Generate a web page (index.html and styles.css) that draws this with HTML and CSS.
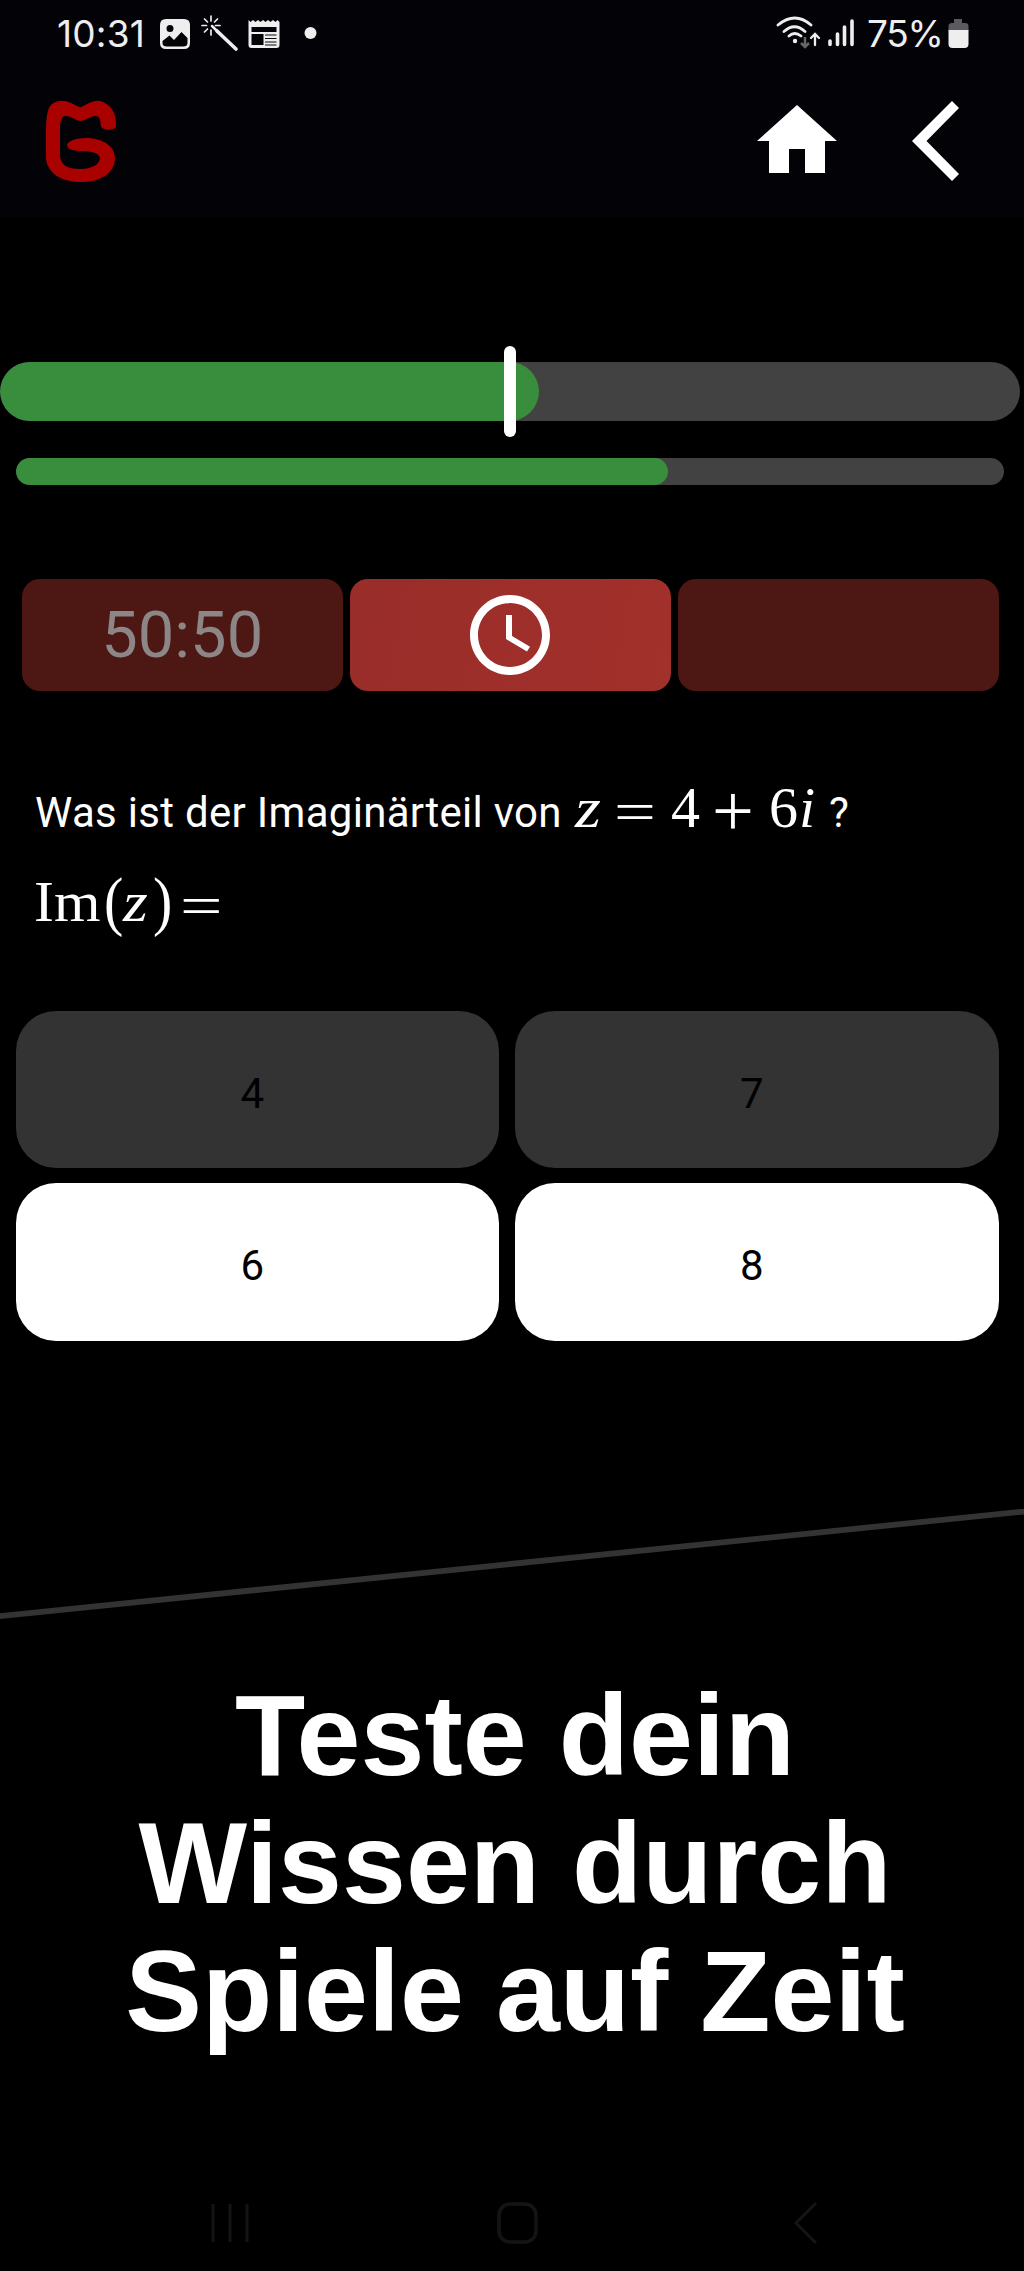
FILE: index.html
```html
<!DOCTYPE html>
<html lang="de">
<head>
<meta charset="utf-8">
<title>Quiz</title>
<link rel="stylesheet" href="styles.css">
</head>
<body>
<header class="top">
  <div class="status">
    <span class="time">10:31</span>
    <svg class="status-icons" width="160" height="40" viewBox="0 0 160 40">
      <path fill="#eee" fill-rule="evenodd" d="M6 6H24Q30 6 30 12V30Q30 36 24 36H6Q0 36 0 30V12Q0 6 6 6ZM10 12A3.500 3.500 0 1 0 10 19A3.500 3.500 0 1 0 10 12ZM2.500 28V30Q2.500 33.500 7 33.500H23Q27.500 33.500 27.500 30V25L21.500 19L14 27L9.500 22.500Z"/>
      <g stroke="#eee" stroke-linecap="round" fill="none"><path stroke-width="3.600" d="M57 18L76 36"/><path stroke-width="2.500" d="M52 13L58 19"/><path stroke-width="1.700" d="M51 3V8M51 17V22M42 12.500H46.500M55.500 12.500H60M44.500 6L47.500 9M57.500 6L54.500 9M44.500 19L47.500 16"/></g>
      <path fill="#eee" fill-rule="evenodd" d="M88.500 7L90.500 9L93 7L95.500 9L98 7L100.500 9L103 7L105.500 9L108 7L110.500 9L113 7L115.500 9L117.500 7L119.500 9V32Q119.500 35 116.500 35H91.500Q88.500 35 88.500 32ZM91.500 14V19H116.500V14ZM91.500 21V32H103.500V21Z"/>
      <path stroke="#08070c" stroke-width="1.200" d="M105 22H116.500M105 25.500H116.500M105 29H116.500M105 32H116.500"/>
      <circle cx="150.500" cy="20" r="6" fill="#eee"/>
    </svg>
    <svg class="signal" width="80" height="40" viewBox="0 0 80 40">
      <g fill="none" stroke="#eee" stroke-width="2.800" stroke-linecap="round"><path d="M2 12Q19 -2 35 12M8 18.500Q18.500 9 29 18.500M13 23Q18.500 18 25 23"/><path d="M39 32V22M35 25L39 21L43 25" stroke-width="2.300"/></g>
      <circle cx="19" cy="28" r="2.200" fill="#eee"/>
      <path d="M29 24V34M25 30L29 34L33 30" fill="none" stroke="#666" stroke-width="2.500"/>
      <path d="M54 28V31.500M61.500 21V31.500M68.500 14V31.500M76 8V31.500" stroke="#eee" stroke-width="3.600" stroke-linecap="round"/>
    </svg>
    <span class="percent">75%</span>
    <svg class="battery" width="21" height="31" viewBox="0 0 21 31"><path fill="#5b5a5f" d="M6 1H14V5H17Q20.500 5 20.500 8V13H.5V8Q.5 5 4 5H6Z"/><path fill="#eee" d="M.5 12H20.500V26Q20.500 30 16.500 30H4.500Q.5 30 .5 26Z"/></svg>
  </div>
  <div class="toolbar">
    <svg class="logo" width="76" height="86" viewBox="0 0 76 86"><path fill="#a90000" d="M1 35C1 18 2 8 7 4C17 -3 26 3 35 7.500C43 4 51 -3 60 3C68 8 71 14 71 26C71 31 57 31 56 26C55 19 55 16 50 16C45 16 40 21 35 21C30 20 26 16 21 16C16 16 15 22 15 29V54C15 65 22 69 35 69C49 69 55 63 55 58C54 52 44 51 34 51C27 51 22 48 22 45C23 41 31 38 40 38C58 38 70 46 70 58C70 72 57 82 36 82C17 82 3 74 1 59Z"/></svg>
    <svg class="home" width="80" height="70" viewBox="0 0 80 70"><path fill="#fff" d="M40 0L80 36H68V68H48V44H32V68H12V36H0Z"/></svg>
    <svg class="back" width="48" height="80" viewBox="0 0 48 80"><path fill="#fff" d="M40 0L47 7L14.500 40L47 73L40 80L0 40Z"/></svg>
  </div>
</header>
<main class="quiz">
  <div class="duel"><div class="bar bar-large"><div class="fill" style="width:539px"></div></div><i class="marker"></i></div>
  <div class="bar bar-small"><div class="fill" style="width:652px"></div></div>
  <div class="jokers">
    <div class="joker used">50:50</div>
    <div class="joker"><svg width="96" height="96" viewBox="0 0 24 24"><path fill="#fff" d="M11.990 2C6.470 2 2 6.480 2 12s4.470 10 9.990 10C17.520 22 22 17.520 22 12S17.520 2 11.990 2zM12 20c-4.420 0-8-3.580-8-8s3.580-8 8-8 8 3.580 8 8-3.580 8-8 8zm.5-13H11v6l5.250 3.150.75-1.230-4.500-2.670z"/></svg></div>
    <div class="joker used"></div>
  </div>
  <div class="question">
    <p class="line"><span class="prompt">Was ist der Imaginärteil von</span><span class="math var z">z</span><span class="math op eq">=</span><span class="math four">4</span><span class="math op plus">+</span><span class="math six">6</span><span class="math var i">i</span><span class="mark">?</span></p>
    <p class="line second"><span class="math im">Im</span><span class="math paren">(</span><span class="math var z2">z</span><span class="math paren close">)</span><span class="math op eq2">=</span></p>
  </div>
  <div class="answers">
    <div class="answer off">4</div><div class="answer off">7</div>
    <div class="answer">6</div><div class="answer">8</div>
  </div>
</main>
<svg class="divider" width="1024" height="112" viewBox="0 0 1024 112"><path d="M-5 107.700L1029 2" stroke="#333" stroke-width="5.800"/></svg>
<h1 class="headline">Teste dein<br>Wissen durch<br>Spiele auf Zeit</h1>
<nav class="nav">
  <svg width="40" height="44" viewBox="0 0 40 44"><path d="M3 3V41M20 3V41M37 3V41" stroke="#141414" stroke-width="3"/></svg>
  <svg width="42" height="44" viewBox="0 0 42 44"><rect x="3" y="3" width="37" height="38" rx="11" fill="none" stroke="#141414" stroke-width="3.500"/></svg>
  <svg width="26" height="44" viewBox="0 0 26 44"><path d="M24 2L4 22L24 42" fill="none" stroke="#141414" stroke-width="3"/></svg>
</nav>
</body>
</html>
```
FILE: styles.css
```css
* { box-sizing: border-box; }
body { margin: 0; width: 1024px; height: 2271px; background: #000; color: #fff; font-family: Roboto, sans-serif; overflow: hidden; display: flex; flex-direction: column; }
svg { display: block; flex: none; }
.top { height: 217px; flex: none; background: #030207; }
.status { height: 68px; padding: 13px 54px 0 57px; display: flex; align-items: flex-start; color: #eee; font: 37px/42px Inter, sans-serif; }
.time { width: 103px; letter-spacing: .200px; }
.signal { margin-left: 456px; }
.percent { width: 80px; margin-left: 11px; letter-spacing: -1.300px; }
.battery { margin: 5px 0 0 1px; }
.toolbar { display: flex; padding: 32px 65px 0 45px; align-items: flex-start; }
.home { margin: 5px 0 0 636px; }
.back { margin: 1px 0 0 75px; }
.quiz { flex: none; height: 1294px; padding-top: 145px; }
.duel { position: relative; width: 1020px; }
.bar { background: #424242; overflow: hidden; }
.fill { height: 100%; background: #388e3c; border-radius: inherit; }
.bar-large { height: 59px; border-radius: 30px; }
.marker { position: absolute; left: 504px; top: -16px; width: 12px; height: 91px; border-radius: 6px; background: #fff; }
.bar-small { width: 988px; height: 27px; margin: 37px 0 0 16px; border-radius: 14px; }
.jokers { display: grid; grid-template-columns: repeat(3, 320.500px); gap: 7.500px; height: 112px; margin: 93.500px 0 0 22px; }
.joker { border-radius: 18px; background: linear-gradient(100deg, #992d29, #a2302b); display: flex; align-items: center; justify-content: center; font-size: 65px; }
.joker.used { background: #4d1714; color: #8c8786; }
.question { height: 320px; padding: 72px 0 0 35px; }
.line { margin: 0; height: 94px; display: flex; align-items: baseline; line-height: 90px; }
.prompt, .mark { font-size: 42px; white-space: nowrap; }
.prompt { width: 540px; letter-spacing: .300px; }
.math { font-family: "Liberation Serif", serif; font-size: 58px; white-space: nowrap; }
.var { font-style: italic; }
.op { font-size: 58px; transform-origin: 0 50%; }
.z { width: 37px; transform: scaleX(1.150); transform-origin: 0 50%; }
.eq { width: 59px; transform: translate(2px, 4px) scaleX(1.280); }
.four { width: 41px; }
.plus { width: 57px; transform: translateY(4px) scale(1.280); }
.six { width: 30px; }
.i { width: 30px; }
.im { width: 70px; transform: translateX(-1px) scaleX(1.030); transform-origin: 0 50%; }
.paren { width: 19px; transform: translateX(-1px) scaleY(1.130); }
.z2 { width: 30px; transform: translateX(-1px) scaleX(1.100); transform-origin: 0 50%; }
.close { width: 26px; }
.eq2 { transform: translateY(4px) scaleX(1.300); }
.answers { display: grid; grid-template: repeat(2, 157.500px) / repeat(2, 483.500px); gap: 15px 16px; margin: 0 0 0 15.500px; }
.answer { border-radius: 40px; background: #fff; color: #000; display: flex; align-items: center; justify-content: center; font-size: 42px; padding: 8px 10px 0 0; }
.off { background: #333; }
.divider { margin-top: -2px; }
.headline { margin: 50px 0 0 6px; font: bold 115px/128px "Liberation Sans", Arial, sans-serif; text-align: center; flex: none; }
.nav { display: flex; margin: 146px 0 0 210px; }
.nav svg:nth-child(2) { margin-left: 246px; }
.nav svg:nth-child(3) { margin-left: 254px; }
```
